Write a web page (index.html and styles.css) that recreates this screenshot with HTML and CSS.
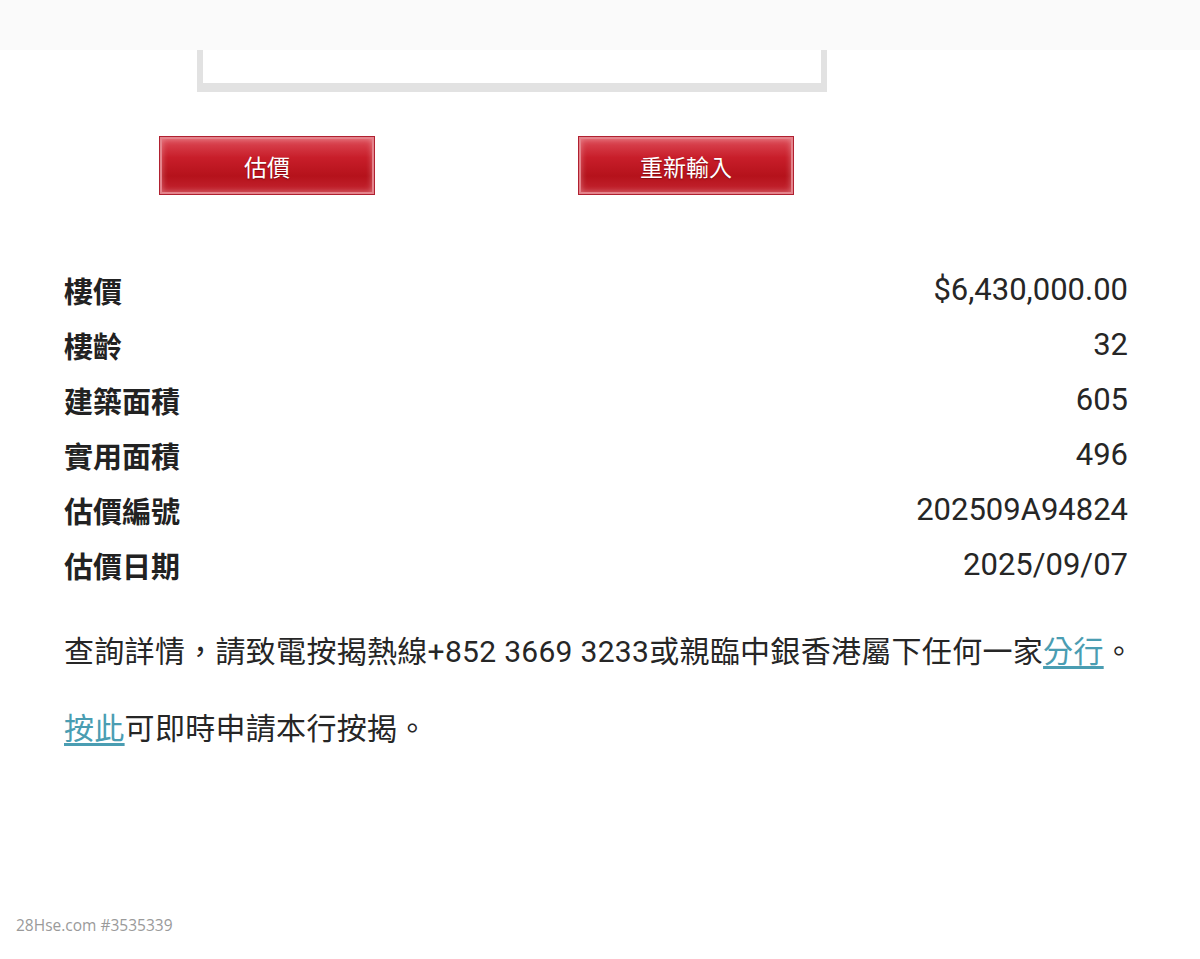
FILE: index.html
```html
<!DOCTYPE html>
<html lang="zh-Hant">
<head>
    <meta charset="UTF-8">
    <meta name="viewport" content="width=device-width, initial-scale=1.0">
    <title>估價結果</title>
    <link rel="stylesheet" href="styles.css">
</head>
<body>
    <div class="top-bar"></div>

    <div class="input-box"></div>

    <div class="button-row">
        <button class="red-btn">估價</button>
        <button class="red-btn">重新輸入</button>
    </div>

    <div class="result-list">
        <div class="result-row"><span class="label">樓價</span><span class="value">$6,430,000.00</span></div>
        <div class="result-row"><span class="label">樓齡</span><span class="value">32</span></div>
        <div class="result-row"><span class="label">建築面積</span><span class="value">605</span></div>
        <div class="result-row"><span class="label">實用面積</span><span class="value">496</span></div>
        <div class="result-row"><span class="label">估價編號</span><span class="value">202509A94824</span></div>
        <div class="result-row"><span class="label">估價日期</span><span class="value">2025/09/07</span></div>
    </div>

    <div class="notes">
        <p>查詢詳情，請致電按揭熱線+852 3669 3233或親臨中銀香港屬下任何一家<a href="#">分行</a>。</p>
        <p><a href="#">按此</a>可即時申請本行按揭。</p>
    </div>

    <div class="watermark">28Hse.com #3535339</div>
</body>
</html>
```

FILE: styles.css
```css
body {
    margin: 0;
    background: #ffffff;
    font-family: Roboto, "Noto Sans CJK TC", sans-serif;
    color: #262626;
    width: 1200px;
    height: 959px;
    overflow: hidden;
    position: relative;
}

.top-bar {
    height: 50px;
    background: #fafafa;
}

.input-box {
    width: 618px;
    height: 33px;
    margin-left: 197px;
    border: 6px solid #e2e2e2;
    border-top: none;
    border-bottom-width: 9px;
}

.button-row {
    display: flex;
    gap: 205px;
    margin: 45px 0 0 160px;
}

.red-btn {
    width: 214px;
    height: 57px;
    border: 2px solid #e4848c;
    outline: 1px solid #b02030;
    background: linear-gradient(to bottom, #dc4a56 0%, #c81e2a 35%, #b5121b 70%, #c42430 100%);
    box-shadow: inset 0 0 6px rgba(255, 255, 255, 0.35);
    color: #ffffff;
    font-family: "Noto Sans CJK TC", sans-serif;
    font-size: 23px;
    text-shadow: 0 1px 1px rgba(80, 0, 0, 0.5);
    padding: 0;
}

.result-list {
    margin: 68px 72px 0 64px;
}

.result-row {
    display: flex;
    justify-content: space-between;
    align-items: center;
    height: 55px;
}

.label {
    font-family: "Noto Sans CJK TC", sans-serif;
    font-weight: 700;
    font-size: 29px;
    color: #222222;
}

.value {
    font-family: Roboto, sans-serif;
    font-size: 31px;
    color: #262626;
}

.notes {
    margin: 39px 0 0 64px;
}

.notes p {
    margin: 0 0 36px;
    font-family: Roboto, "Noto Sans CJK TC", sans-serif;
    font-size: 30px;
    line-height: 41px;
    letter-spacing: 0.3px;
    color: #262626;
}

.notes a {
    color: #4a9db2;
    text-decoration: underline;
    text-underline-offset: 4px;
}

.watermark {
    position: absolute;
    left: 16px;
    top: 914px;
    font-family: "Open Sans", sans-serif;
    font-size: 15.5px;
    color: #9a9a9a;
}
```
